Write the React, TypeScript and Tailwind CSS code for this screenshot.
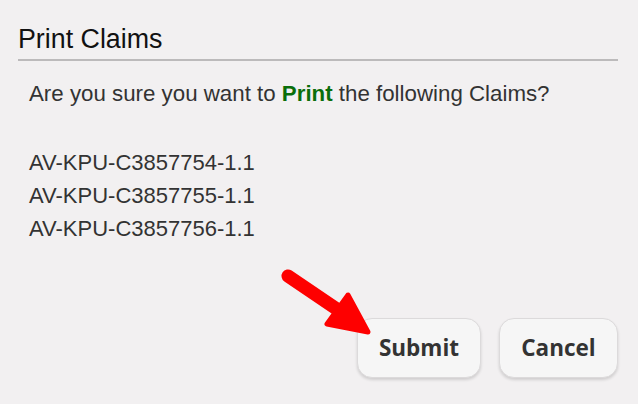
const claims = ['AV-KPU-C3857754-1.1', 'AV-KPU-C3857755-1.1', 'AV-KPU-C3857756-1.1']

function DialogButton({ label, width }: { label: string; width: string }) {
  return (
    <button
      className={`${width} h-[60px] rounded-[15px] border-[1.5px] border-[#dcdadb] bg-[#f6f6f6] shadow-[0_2px_3px_rgba(0,0,0,0.14)] text-[22.5px] font-bold text-[#333] font-['Open_Sans',sans-serif] flex items-center justify-center`}
    >
      {label}
    </button>
  )
}

export default function App() {
  return (
    <div className="relative w-[638px] h-[404px] overflow-hidden bg-[#f2f0f1] pl-[18px] pr-[20px] pt-[23px] font-['Liberation_Sans',Arial,sans-serif]">
      <h1 className="text-[26.8px] leading-[32px] text-[#111]">Print Claims</h1>
      <div className="mt-[4px] h-[2px] bg-[#bcbabb]" />

      <p className="mt-[15.5px] pl-[11px] text-[22.3px] leading-[33px] text-[#333]">
        Are you sure you want to <span className="font-bold text-[#0a6e0a]">Print</span> the following Claims?
      </p>

      <ul className="mt-[36px] pl-[11px] text-[22px] leading-[33.4px] text-[#333]">
        {claims.map((c) => (
          <li key={c}>{c}</li>
        ))}
      </ul>

      <div className="mt-[72px] flex justify-end gap-[18px]">
        <DialogButton label="Submit" width="w-[124px]" />
        <DialogButton label="Cancel" width="w-[119px]" />
      </div>

      {/* red pointer arrow drawn over the dialog */}
      <svg className="pointer-events-none absolute left-0 top-0" width="638" height="404" viewBox="0 0 638 404">
        <line x1="288" y1="276" x2="350" y2="318" stroke="#fe0000" strokeWidth="13" strokeLinecap="round" />
        <polygon
          points="368,332 348,295 327,324"
          fill="#fe0000"
          stroke="#fe0000"
          strokeWidth="5"
          strokeLinejoin="round"
        />
      </svg>
    </div>
  )
}
